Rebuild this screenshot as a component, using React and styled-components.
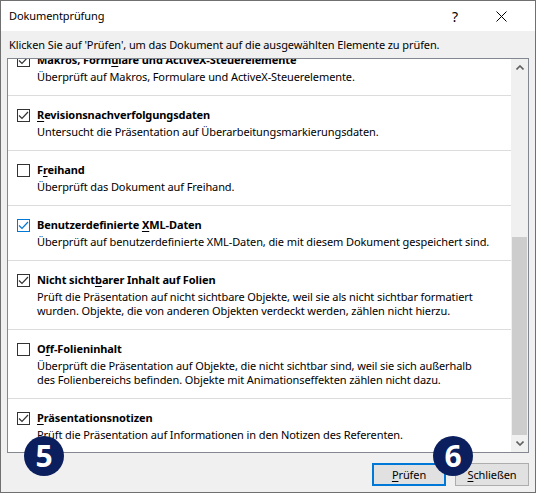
import React from 'react';
import styled, { createGlobalStyle } from 'styled-components';

const Global = createGlobalStyle`
  html, body { margin: 0; padding: 0; background: #fff; }
  body {
    font-family: "Noto Sans", "Open Sans", sans-serif;
    font-size: 11px;
    letter-spacing: -0.1px;
    color: #000;
  }
  * { box-sizing: border-box; }
`;

const Window = styled.div`
  position: relative;
  width: 536px;
  height: 493px;
  border: 1px solid #707070;
  background: #f0f0f0;
  display: flex;
  flex-direction: column;
  overflow: hidden;
`;

const TitleBar = styled.div`
  height: 30px;
  background: #fff;
  display: flex;
  align-items: center;
  padding-left: 8px;
  padding-right: 11px;
`;

const Title = styled.div`
  flex: 1;
  font-size: 11px;
  line-height: 16px;
`;

const TitleButton = styled.div`
  width: 46px;
  height: 30px;
  display: flex;
  align-items: center;
  justify-content: center;
  font-size: 14px;
  color: #000;
`;

const Instruction = styled.div`
  height: 27px;
  padding: 6px 0 0 8px;
  line-height: 16px;
`;

const ListBox = styled.div`
  margin: 0 6px;
  height: 395px;
  border: 1px solid #828790;
  background: #fff;
  display: flex;
  overflow: hidden;
`;

const Viewport = styled.div`
  flex: 1;
  overflow: hidden;
`;

const Items = styled.div`
  margin-top: ${p => -p.$offset}px;
`;

const Item = styled.div`
  display: flex;
  padding: 11px 0 11px 9px;
  border-bottom: 1px solid #dcdcdc;
`;

const Box = styled.div`
  width: 13px;
  height: 13px;
  margin-top: 2px;
  border: 1px solid ${p => (p.$focus ? '#0078d7' : '#333')};
  background: #fff;
  flex: none;
  display: flex;
  align-items: center;
  justify-content: center;
`;

const Texts = styled.div`
  margin-left: 7px;
  display: flex;
  flex-direction: column;
  gap: 2px;
`;

const ItemTitle = styled.div`
  font-weight: 700;
  line-height: 16px;
  white-space: nowrap;
  & u { text-underline-offset: 2px; }
`;

const Desc = styled.div`
  line-height: 14px;
  white-space: nowrap;
`;

const ScrollBar = styled.div`
  width: 17px;
  flex: none;
  background: #f0f0f0;
  display: flex;
  flex-direction: column;
`;

const Arrow = styled.div`
  height: 17px;
  display: flex;
  align-items: center;
  justify-content: center;
`;

const Track = styled.div`
  flex: 1;
  display: flex;
  flex-direction: column;
  justify-content: flex-end;
`;

const Thumb = styled.div`
  height: ${p => p.$h}px;
  margin: 0 1px;
  background: #cdcdcd;
`;

const Footer = styled.div`
  flex: 1;
  display: flex;
  justify-content: flex-end;
  align-items: flex-start;
  gap: 9px;
  padding: 10px 6px 0 0;
`;

const Button = styled.div`
  width: 74px;
  height: 23px;
  background: #e1e1e1;
  border: ${p => (p.$default ? '2px solid #0078d7' : '1px solid #adadad')};
  display: flex;
  align-items: center;
  justify-content: center;
  line-height: 16px;
  & u { text-underline-offset: 2px; }
`;

const Badge = styled.div`
  position: absolute;
  left: ${p => p.$x}px;
  top: ${p => p.$y}px;
  width: 40px;
  height: 40px;
  border-radius: 50%;
  background: #0b1f5e;
  color: #fff;
  font-family: "Open Sans", "Noto Sans", sans-serif;
  font-weight: 700;
  font-size: 30px;
  letter-spacing: 0;
  display: flex;
  align-items: center;
  justify-content: center;
  line-height: 1;
`;

const Check = ({ color = '#333' }) => (
  <svg width="11" height="11" viewBox="0 0 11 11">
    <polyline points="1,5.5 4,8.5 10,2" fill="none" stroke={color} strokeWidth="1.2" />
  </svg>
);

const Chevron = ({ up }) => (
  <svg width="8" height="5" viewBox="0 0 8 5">
    <polyline
      points={up ? '0.5,4.5 4,1 7.5,4.5' : '0.5,0.5 4,4 7.5,0.5'}
      fill="none"
      stroke="#606060"
      strokeWidth="1.6"
    />
  </svg>
);

const items = [
  {
    checked: true,
    title: <>Makros, Form<u>u</u>lare und ActiveX-Steuerelemente</>,
    desc: ['Überprüft auf Makros, Formulare und ActiveX-Steuerelemente.'],
  },
  {
    checked: true,
    title: <><u>R</u>evisionsnachverfolgungsdaten</>,
    desc: ['Untersucht die Präsentation auf Überarbeitungsmarkierungsdaten.'],
  },
  {
    checked: false,
    title: <>F<u>r</u>eihand</>,
    desc: ['Überprüft das Dokument auf Freihand.'],
  },
  {
    checked: true,
    focus: true,
    title: <>Benutzerdefinierte <u>X</u>ML-Daten</>,
    desc: ['Überprüft auf benutzerdefinierte XML-Daten, die mit diesem Dokument gespeichert sind.'],
  },
  {
    checked: true,
    title: <>Nicht sicht<u>b</u>arer Inhalt auf Folien</>,
    desc: [
      'Prüft die Präsentation auf nicht sichtbare Objekte, weil sie als nicht sichtbar formatiert',
      'wurden. Objekte, die von anderen Objekten verdeckt werden, zählen nicht hierzu.',
    ],
  },
  {
    checked: false,
    title: <>O<u>f</u>f-Folieninhalt</>,
    desc: [
      'Überprüft die Präsentation auf Objekte, die nicht sichtbar sind, weil sie sich außerhalb',
      'des Folienbereichs befinden. Objekte mit Animationseffekten zählen nicht dazu.',
    ],
  },
  {
    checked: true,
    title: <><u>P</u>räsentationsnotizen</>,
    desc: ['Prüft die Präsentation auf Informationen in den Notizen des Referenten.'],
  },
];

export default function App() {
  return (
    <>
      <Global />
      <Window>
        <TitleBar>
          <Title>Dokumentprüfung</Title>
          <TitleButton>?</TitleButton>
          <TitleButton>
            <svg width="11" height="11" viewBox="0 0 11 11">
              <path d="M0.5 0.5 L10.5 10.5 M10.5 0.5 L0.5 10.5" stroke="#000" strokeWidth="1" />
            </svg>
          </TitleButton>
        </TitleBar>
        <Instruction>
          Klicken Sie auf 'Prüfen', um das Dokument auf die ausgewählten Elemente zu prüfen.
        </Instruction>
        <ListBox>
          <Viewport>
            <Items $offset={18}>
              {items.map((it, i) => (
                <Item key={i}>
                  <Box $focus={it.focus}>
                    {it.checked && <Check color={it.focus ? '#0078d7' : '#333'} />}
                  </Box>
                  <Texts>
                    <ItemTitle>{it.title}</ItemTitle>
                    <Desc>
                      {it.desc.map((line, j) => (
                        <div key={j}>{line}</div>
                      ))}
                    </Desc>
                  </Texts>
                </Item>
              ))}
            </Items>
          </Viewport>
          <ScrollBar>
            <Arrow><Chevron up /></Arrow>
            <Track>
              <Thumb $h={198} />
            </Track>
            <Arrow><Chevron /></Arrow>
          </ScrollBar>
        </ListBox>
        <Footer>
          <Button $default><u>P</u>rüfen</Button>
          <Button><u>S</u>chließen</Button>
        </Footer>
        <Badge $x={23} $y={435}>5</Badge>
        <Badge $x={432} $y={435}>6</Badge>
      </Window>
    </>
  );
}
